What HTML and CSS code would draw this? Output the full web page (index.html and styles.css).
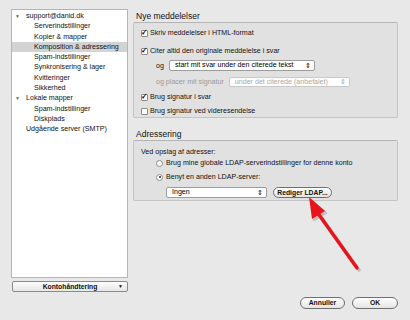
FILE: index.html
```html
<!DOCTYPE html>
<html lang="da">
<head>
	<meta charset="UTF-8">
	<title>Kontoindstillinger</title>
	<link rel="stylesheet" href="styles.css">
</head>
<body>
<div class="window">
	<div class="side">
		<ul class="tree">
			<li class="acct"><span class="tri">▼</span>support@danid.dk</li>
			<li class="sub">Serverindstillinger</li>
			<li class="sub">Kopier &amp; mapper</li>
			<li class="sub sel">Komposition &amp; adressering</li>
			<li class="sub">Spam-indstillinger</li>
			<li class="sub">Synkronisering &amp; lager</li>
			<li class="sub">Kvitteringer</li>
			<li class="sub">Sikkerhed</li>
			<li class="acct"><span class="tri">▼</span>Lokale mapper</li>
			<li class="sub">Spam-indstillinger</li>
			<li class="sub">Diskplads</li>
			<li class="acct">Udgående server (SMTP)</li>
		</ul>
		<div class="acct-btn">Kontohåndtering<span class="drop">▼</span></div>
	</div>

	<div class="main">
		<h2 class="head">Nye meddelelser</h2>
		<div class="group g1">
			<div class="row r1"><span class="chk on">✓</span>Skriv meddelelser i HTML-format</div>
			<div class="row r2"><span class="chk on">✓</span>Citer altid den originale meddelelse i svar</div>
			<div class="row r3"><span class="lbl">og</span><span class="select s1">start mit svar under den citerede tekst<span class="step">⇕</span></span></div>
			<div class="row r4 off"><span class="lbl">og placer mit signatur</span><span class="select s2">under det citerede (anbefalet)<span class="step">⇕</span></span></div>
			<div class="row r5"><span class="chk on">✓</span>Brug signatur i svar</div>
			<div class="row r6"><span class="chk"></span>Brug signatur ved videresendelse</div>
		</div>

		<h2 class="head h2">Adressering</h2>
		<div class="group g2">
			<div class="row q1">Ved opslag af adresser:</div>
			<div class="row q2"><span class="radio"></span>Brug mine globale LDAP-serverindstillinger for denne konto</div>
			<div class="row q3"><span class="radio on"></span>Benyt en anden LDAP-server:</div>
			<div class="row q4"><span class="select s3">Ingen<span class="step">⇕</span></span><span class="btn ldap">Rediger LDAP...</span></div>
		</div>

		<div class="foot">
			<span class="btn cancel">Annuller</span>
			<span class="btn ok">OK</span>
		</div>
	</div>
</div>

<!-- rød pil (annotering over dialogen) -->
<svg class="arrow" width="410" height="320" viewBox="0 0 410 320">
	<g transform="translate(2,2)" fill="#9a9a9a" stroke="#9a9a9a" opacity="0.5">
		<line x1="357" y1="268" x2="317" y2="212" stroke-width="3.5" stroke-linecap="round"/>
		<polygon points="309,197 325,211 312,219"/>
	</g>
	<line x1="357" y1="268" x2="317" y2="212" stroke="#e8141c" stroke-width="3.5" stroke-linecap="round"/>
	<polygon points="309,197 325,211 312,219" fill="#e8141c"/>
</svg>
</body>
</html>
```

FILE: styles.css
```css
* {
	margin: 0;
	padding: 0;
	box-sizing: border-box;
}
body {
	background: #e8e8e8;
	font-family: "Liberation Sans", Arial, sans-serif;
	font-size: 7.1px;
	color: #111;
}
.window {
	display: flex;
	height: 320px;
	padding: 9px 12px 0 11px;
	gap: 5px;
}

/* venstre side */
.side {
	width: 117px;
	display: flex;
	flex-direction: column;
}
.tree {
	list-style: none;
	background: #fff;
	border: 1px solid #b5b5b5;
	height: 269px;
	padding-top: 1px;
}
.tree li {
	height: 10.3px;
	line-height: 10.3px;
	white-space: nowrap;
}
.acct {
	padding-left: 3px;
}
.acct .tri {
	display: inline-block;
	width: 11px;
	font-size: 5px;
	color: #666;
	vertical-align: top;
}
.tree li.acct:last-child {
	padding-left: 14px;
}
.sub {
	padding-left: 22px;
}
.sel {
	background: #d3d3d3;
}
.acct-btn {
	margin-top: 3px;
	margin-left: 1px;
	height: 11px;
	border: 1px solid #8a8a8a;
	border-radius: 2px;
	background: linear-gradient(#fdfdfd, #e6e6e6);
	text-align: center;
	line-height: 9px;
	font-weight: bold;
	position: relative;
	font-size: 6.8px;
}
.acct-btn .drop {
	position: absolute;
	right: 4px;
	top: 0;
	font-size: 5px;
}

/* højre side */
.main {
	flex: 1;
	display: flex;
	flex-direction: column;
	padding-top: 2px;
}
.head {
	font-size: 8.5px;
	font-weight: normal;
	height: 11px;
	line-height: 11px;
	padding-left: 3px;
}
.h2 {
	margin-top: 11px;
}
.group {
	background: #e1e1e1;
	border: 1px solid #c4c4c4;
	border-top-color: #b4b4b4;
	border-radius: 2px;
	padding-left: 7px;
}
.g1 {
	height: 96px;
	padding-top: 5px;
}
.g2 {
	height: 61px;
	padding-top: 6px;
}
.row {
	display: flex;
	align-items: center;
	height: 10px;
	white-space: nowrap;
}
.r2 { margin-top: 8px; }
.r3 { margin-top: 4px; height: 11px; padding-left: 15px; }
.r4 { margin-top: 6px; height: 10px; padding-left: 15px; }
.r5 { margin-top: 5px; }
.r6 { margin-top: 4px; }
.q2 { margin-top: 1px; padding-left: 15px; }
.q3 { margin-top: 4px; padding-left: 15px; }
.q4 { margin-top: 5px; height: 11px; padding-left: 25px; }

.off {
	color: #9a9a9a;
}
.chk {
	width: 7px;
	height: 7px;
	border: 1px solid #8c8c8c;
	border-radius: 1px;
	background: #fff;
	margin-right: 2px;
	font-size: 8px;
	line-height: 4px;
	font-weight: bold;
	text-indent: -1px;
	color: #111;
	overflow: visible;
}
.radio {
	width: 7px;
	height: 7px;
	border: 1px solid #8c8c8c;
	border-radius: 50%;
	background: #fff;
	margin-right: 3px;
	position: relative;
}
.radio.on::after {
	content: '';
	position: absolute;
	left: 1.5px;
	top: 1.5px;
	width: 2px;
	height: 2px;
	border-radius: 50%;
	background: #222;
}
.lbl {
	margin-right: 5px;
}
.select {
	position: relative;
	background: #fff;
	border: 1px solid #9c9c9c;
	border-radius: 2px;
	height: 11px;
	line-height: 9px;
	padding-left: 5px;
	color: #000;
}
.s1 { width: 146px; }
.s2 {
	width: 121px;
	height: 10px;
	line-height: 8px;
	color: #a8a8a8;
	border-color: #c8c8c8;
}
.s3 { width: 101px; }
.step {
	position: absolute;
	right: 3px;
	top: 0;
	font-size: 7px;
}
.btn {
	display: inline-block;
	height: 12px;
	line-height: 10px;
	border: 1px solid #6f6f6f;
	border-radius: 6px;
	background: linear-gradient(#ffffff, #e4e4e4);
	text-align: center;
	font-weight: bold;
	font-size: 6.8px;
}
.ldap {
	width: 59px;
	height: 11px;
	line-height: 9px;
	margin-left: 6px;
}
.foot {
	margin-top: auto;
	margin-bottom: 11px;
	display: flex;
	justify-content: flex-end;
	gap: 7px;
}
.cancel { width: 45px; }
.ok { width: 46px; }

.arrow {
	position: absolute;
	left: 0;
	top: 0;
	pointer-events: none;
}
```
